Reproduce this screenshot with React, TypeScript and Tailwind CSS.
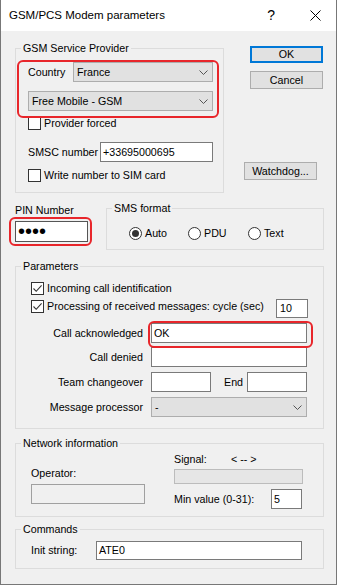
import React from "react";

function Group({ label, className, children }: { label: string; className: string; children?: React.ReactNode }) {
  return (
    <div className={`relative border border-[#dcdcdc] ${className}`}>
      <span className="absolute left-[5px] top-[-9px] bg-[#f0f0f0] px-[2px] leading-[16px] whitespace-nowrap">{label}</span>
      {children}
    </div>
  );
}

function Check({ checked }: { checked?: boolean }) {
  return (
    <span className="w-[13px] h-[13px] border border-[#333333] bg-white flex items-center justify-center shrink-0">
      {checked && (
        <svg width="11" height="11" viewBox="0 0 11 11">
          <path d="M1.5 5.5 L4.2 8.3 L9.6 2.3" fill="none" stroke="#333333" strokeWidth="1.1" />
        </svg>
      )}
    </span>
  );
}

function Radio({ on }: { on?: boolean }) {
  return (
    <span className="w-[13px] h-[13px] rounded-full border border-[#333333] bg-white flex items-center justify-center shrink-0">
      {on && <span className="w-[7px] h-[7px] rounded-full bg-[#333333]" />}
    </span>
  );
}

function Select({ value, className }: { value: string; className: string }) {
  return (
    <div className={`flex items-center justify-between border border-[#adadad] bg-[#e1e1e1] pl-[3px] pr-[4px] h-[20px] ${className}`}>
      <span>{value}</span>
      <svg width="9" height="5" viewBox="0 0 9 5">
        <path d="M0.5 0.5 L4.5 4.5 L8.5 0.5" fill="none" stroke="#555555" strokeWidth="1" />
      </svg>
    </div>
  );
}

function Input({ value, className }: { value?: string; className: string }) {
  return (
    <div className={`flex items-center border border-[#7a7a7a] bg-white pl-[2px] ${className}`}>{value}</div>
  );
}

export default function App() {
  return (
    <div className="w-[337px] h-[585px] flex flex-col bg-[#f0f0f0] border-x border-b border-[#777777] text-[10.7px] leading-[15px] text-black font-['Liberation_Sans',Arial,sans-serif]">
      <div className="h-[31px] shrink-0 bg-white flex items-center pl-[8px] text-[11.5px]">
        <span className="flex-1">GSM/PCS Modem parameters</span>
        <span className="text-[14px]">?</span>
        <svg className="ml-[35px] mr-[15px]" width="11" height="11" viewBox="0 0 11 11">
          <path d="M0.5 0.5 L10.5 10.5 M10.5 0.5 L0.5 10.5" stroke="#000" strokeWidth="1" />
        </svg>
      </div>

      <div className="flex flex-col pl-[14px]">
        <div className="flex">
          <Group label="GSM Service Provider" className="mt-[17px] w-[209px] h-[145px] pl-[12px] pt-[13px]">
            <div className="flex items-center h-[20px]">
              <span className="w-[45px]">Country</span>
              <Select value="France" className="w-[140px]" />
            </div>
            <Select value="Free Mobile - GSM" className="mt-[9px] w-[185px]" />
            <div className="mt-[6px] flex items-center gap-[3px] h-[13px]">
              <Check />
              <span>Provider forced</span>
            </div>
            <div className="mt-[12px] flex items-center h-[20px]">
              <span className="w-[72px] whitespace-nowrap">SMSC number</span>
              <Input value="+33695000695" className="w-[113px] h-[20px]" />
            </div>
            <div className="mt-[7px] flex items-center gap-[3px] h-[13px]">
              <Check />
              <span>Write number to SIM card</span>
            </div>
            <div className="absolute left-[1px] top-[11px] w-[202px] h-[58px] border-2 border-[#e8262b] rounded-[6px]" />
          </Group>

          <div className="ml-[20px] flex flex-col">
            <div className="mt-[15px] ml-[6px] w-[73px] h-[17px] border-2 border-[#0078d7] bg-[#e1e1e1] flex items-center justify-center">OK</div>
            <div className="mt-[8px] ml-[6px] w-[73px] h-[18px] border border-[#adadad] bg-[#e1e1e1] flex items-center justify-center">Cancel</div>
            <div className="mt-[73px] w-[73px] h-[18px] border border-[#adadad] bg-[#e1e1e1] flex items-center justify-center">Watchdog...</div>
          </div>
        </div>

        <div className="flex">
          <div className="relative w-[73px] flex flex-col">
            <span className="mt-[10px]">PIN Number</span>
            <div className="mt-[3px] h-[21px] w-[73px] flex items-center border border-[#555555] bg-white pl-[2px] text-[20px] leading-[15px] tracking-[0px]">••••</div>
            <div className="absolute left-[-6px] top-[24px] w-[83px] h-[29px] border-2 border-[#e8262b] rounded-[6px]" />
          </div>
          <Group label="SMS format" className="ml-[18px] mt-[15px] w-[218px] h-[42px] pl-[22px] pt-[17px]">
            <div className="flex">
              <div className="w-[59px] flex items-center gap-[3px]">
                <Radio on />
                <span>Auto</span>
              </div>
              <div className="w-[60px] flex items-center gap-[3px]">
                <Radio />
                <span>PDU</span>
              </div>
              <div className="flex items-center gap-[3px]">
                <Radio />
                <span>Text</span>
              </div>
            </div>
          </Group>
        </div>

        <Group label="Parameters" className="mt-[16px] w-[309px] h-[163px] pl-[15px] pr-[15px] pt-[15px]">
          <div className="flex items-center gap-[3px] h-[13px]">
            <Check checked />
            <span>Incoming call identification</span>
          </div>
          <div className="mt-[4px] h-[19px] flex items-start">
            <div className="mt-[1px] h-[13px] flex items-center gap-[3px]">
              <Check checked />
              <span className="whitespace-nowrap">Processing of received messages: cycle (sec)</span>
            </div>
            <Input value="10" className="ml-auto w-[32px] h-[19px] pl-[3px]" />
          </div>
          <div className="relative mt-[5px] h-[20px] flex items-center">
            <span className="w-[112px] text-right">Call acknowledged</span>
            <Input value="OK" className="ml-[8px] w-[156px] h-[20px]" />
            <div className="absolute left-[117px] top-[-2px] w-[165px] h-[27px] border-2 border-[#e8262b] rounded-[6px]" />
          </div>
          <div className="mt-[4px] h-[20px] flex items-center">
            <span className="w-[112px] text-right">Call denied</span>
            <Input className="ml-[8px] w-[156px] h-[20px]" />
          </div>
          <div className="mt-[5px] h-[20px] flex items-center">
            <span className="w-[112px] text-right">Team changeover</span>
            <Input className="ml-[8px] w-[60px] h-[20px]" />
            <span className="ml-[13px] w-[23px]">End</span>
            <Input className="w-[60px] h-[20px]" />
          </div>
          <div className="mt-[5px] h-[20px] flex items-center">
            <span className="w-[112px] text-right">Message processor</span>
            <Select value="-" className="ml-[8px] w-[156px]" />
          </div>
        </Group>

        <Group label="Network information" className="mt-[14px] w-[309px] h-[74px] pl-[15px] flex">
          <div className="w-[114px] flex flex-col">
            <span className="mt-[22px]">Operator:</span>
            <div className="mt-[3px] h-[20px] w-[114px] border border-[#a0a0a0] bg-[#f0f0f0]" />
          </div>
          <div className="ml-[29px] flex flex-col">
            <div className="mt-[8px] flex">
              <span className="w-[57px]">Signal:</span>
              <span>&lt; -- &gt;</span>
            </div>
            <div className="mt-[2px] w-[129px] h-[15px] bg-[#e6e6e6] border border-[#bcbcbc]" />
            <div className="mt-[5px] flex items-center h-[20px]">
              <span className="w-[97px]">Min value (0-31):</span>
              <Input value="5" className="w-[31px] h-[20px]" />
            </div>
          </div>
        </Group>

        <Group label="Commands" className="mt-[12px] w-[309px] h-[40px] pl-[15px] pt-[11px]">
          <div className="flex items-center h-[19px]">
            <span className="w-[65px]">Init string:</span>
            <Input value="ATE0" className="w-[206px] h-[19px]" />
          </div>
        </Group>
      </div>
    </div>
  );
}
